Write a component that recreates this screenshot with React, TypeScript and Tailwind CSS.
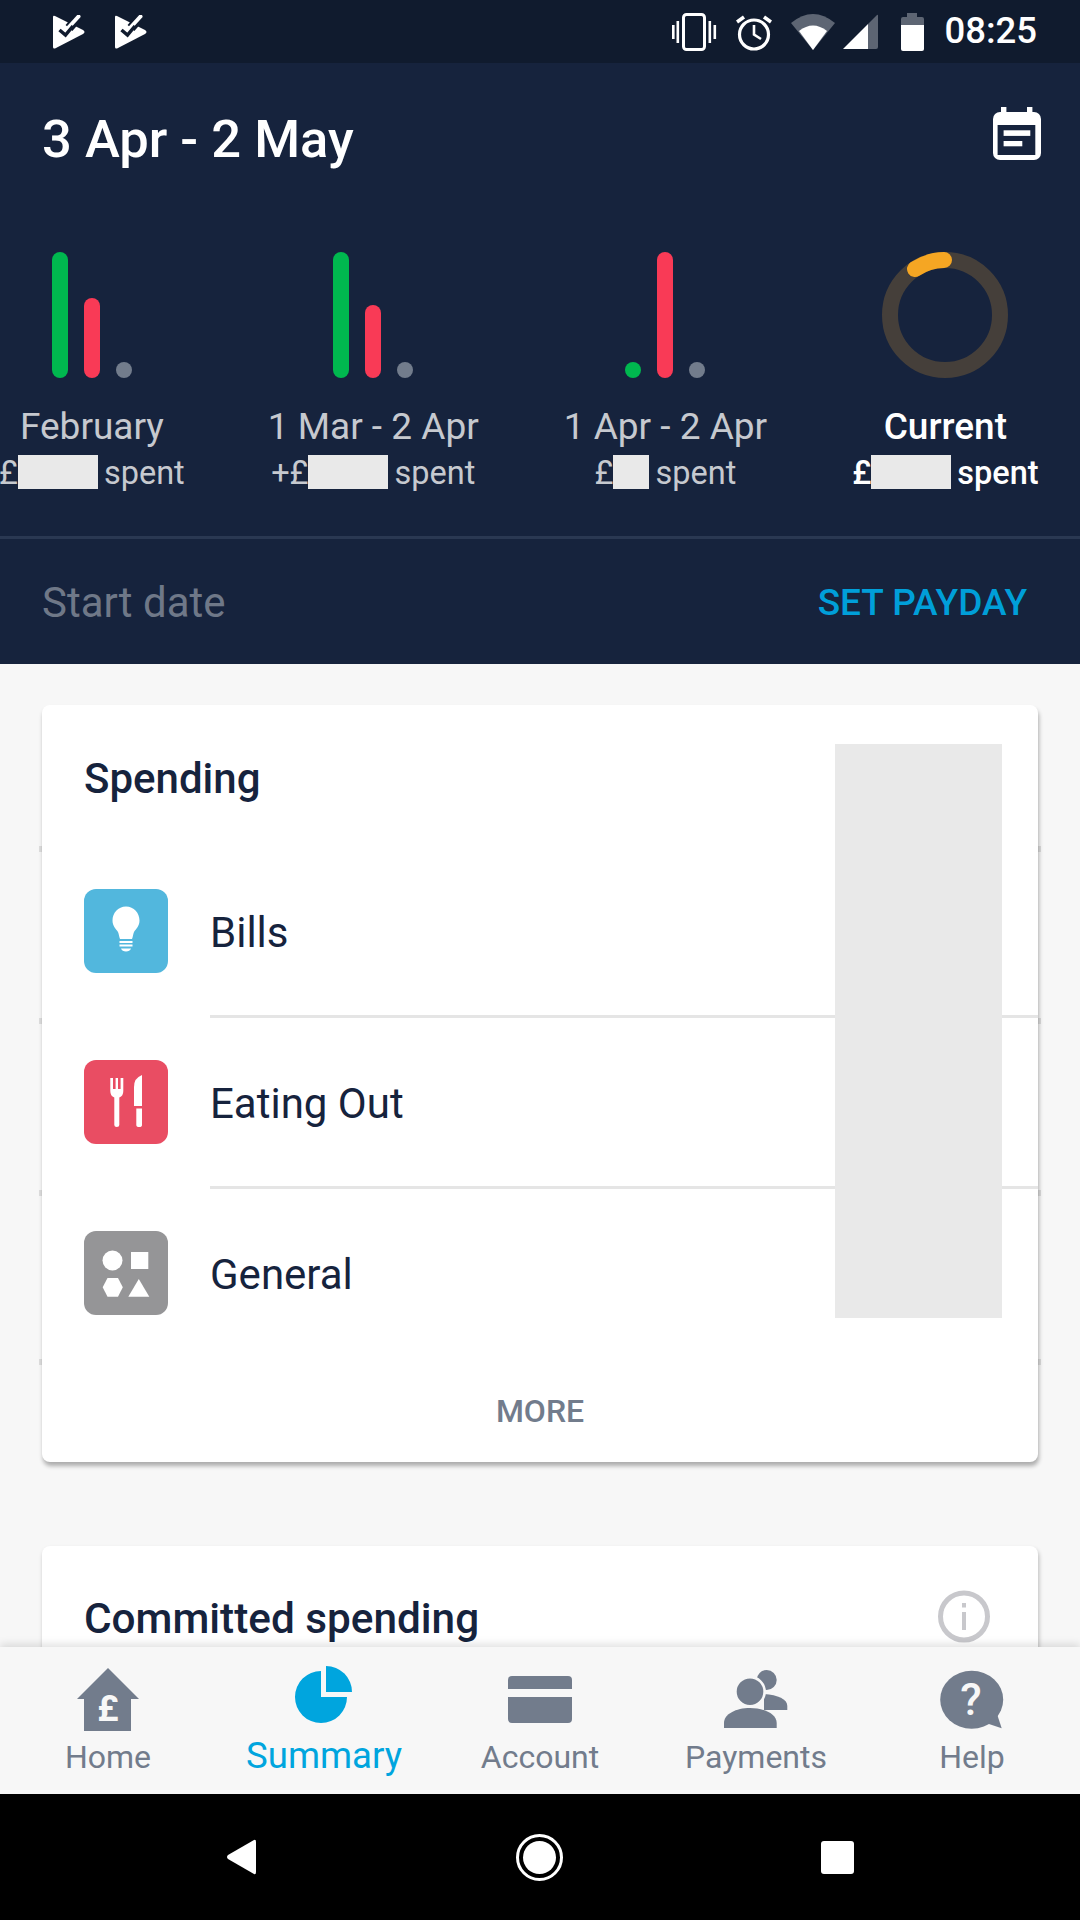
const GREY = "#727c8c";
const PAGE = "#f7f7f7";

function AppIcon() {
  return (
    <svg width="32" height="34" viewBox="0 0 32 34">
      <path d="M2 1 L30 15 Q33 17 30 19 L2 33.5 Q0 34 0 32 V2 Q0 0 2 1 Z" fill="#fff" />
      <path d="M27 0 L16 13" stroke="#101b2e" strokeWidth="9" fill="none" />
      <path d="M25.5 1.5 L15 13" stroke="#fff" strokeWidth="4" strokeLinecap="round" fill="none" />
      <path d="M6.5 15 L12.5 20 L20 11" stroke="#101b2e" strokeWidth="3.5" fill="none" />
    </svg>
  );
}

function StatusIcons() {
  return (
    <div className="ml-auto flex items-center">
      <svg width="46" height="38" viewBox="0 0 46 38" fill="#fff">
        <rect x="12.5" y="1.5" width="21" height="35" rx="3" fill="none" stroke="#fff" strokeWidth="3" />
        <rect x="1" y="12" width="2.6" height="14" />
        <rect x="5.5" y="8" width="2.6" height="22" />
        <rect x="37.5" y="8" width="2.6" height="22" />
        <rect x="42.5" y="12" width="2.6" height="14" />
      </svg>
      <svg className="ml-[19px]" width="36" height="38" viewBox="0 0 36 38" fill="none" stroke="#fff">
        <circle cx="18" cy="21.5" r="14.5" strokeWidth="3.2" />
        <path d="M18 12 V21.5 L25 26" strokeWidth="2.6" />
        <path d="M1 9 L8 4 M28 4 L35 9" strokeWidth="3.6" />
      </svg>
      <svg className="ml-[19px]" width="45" height="38" viewBox="0 0 45 38">
        <path d="M0 10 Q22 -8 44 10 L22 37 Z" fill="#5d6573" strokeLinejoin="round" />
        <path d="M8 18 Q22 7 36 18 L22 37 Z" fill="#fff" />
      </svg>
      <svg className="ml-[7px]" width="35" height="36" viewBox="0 0 35 36">
        <path d="M0 35 L25 10 V35 Z" fill="#fff" />
        <path d="M25 10 L34 1 Q35 0 35 2 V33 Q35 35 33 35 H25 Z" fill="#5d6573" />
      </svg>
      <svg className="ml-[23px]" width="23" height="38" viewBox="0 0 23 38">
        <path d="M6 0 H16 V4 H21 Q23 4 23 6 V12 H0 V6 Q0 4 2 4 H6 Z" fill="#5d6573" />
        <path d="M0 12 H23 V36 Q23 38 21 38 H2 Q0 38 0 36 Z" fill="#fff" />
      </svg>
      <span className="ml-[20px] text-[36.5px] font-medium leading-none text-white">08:25</span>
    </div>
  );
}

function CalendarIcon() {
  return (
    <svg className="-mt-[11px]" width="48" height="54" viewBox="0 0 48 54">
      <rect x="8" y="0" width="5.4" height="8" fill="#fff" />
      <rect x="34" y="0" width="5.4" height="8" fill="#fff" />
      <rect x="0" y="5" width="48" height="48" rx="7" fill="#fff" />
      <rect x="4.6" y="18" width="37.7" height="30" fill="#16233d" />
      <rect x="10.6" y="23.3" width="26.7" height="5.6" fill="#fff" />
      <rect x="10.6" y="34" width="18.7" height="5.3" fill="#fff" />
    </svg>
  );
}

function Bars({ green, red, grey }: { green: string; red: string; grey: string }) {
  return (
    <div className="flex h-[126px] items-end gap-4">
      <div className={`w-4 rounded-full bg-[#00b84f] ${green}`} />
      <div className={`w-4 rounded-full bg-[#f93a56] ${red}`} />
      <div className={`w-4 rounded-full bg-[#727c8c] ${grey}`} />
    </div>
  );
}

function Ring() {
  return (
    <svg width="126" height="126" viewBox="0 0 126 126" fill="none" strokeWidth="16">
      <circle cx="63" cy="63" r="55" stroke="#453f3a" />
      <path d="M33 17 A55 55 0 0 1 62 8" stroke="#f5a623" strokeLinecap="round" />
    </svg>
  );
}

function Period({
  chart,
  label,
  prefix,
  hidden,
  current,
  className = "",
}: {
  chart: React.ReactNode;
  label: string;
  prefix: string;
  hidden: string;
  current?: boolean;
  className?: string;
}) {
  const tone = current ? "font-medium text-white" : "text-[#c6c9cf]";
  return (
    <div className={`flex shrink-0 flex-col items-center ${tone} ${className}`}>
      {chart}
      <div className="mt-[28px] text-[37px] leading-[42px]">{label}</div>
      <div className="mt-[7px] flex h-[34px] items-center text-[32.5px] leading-[34px]">
        <span className="translate-y-[1px]">{prefix}</span>
        <div className={`h-[34px] bg-[#e9e9e9] ${hidden}`} />
        <span className="ml-[6px] translate-y-[1px]">spent</span>
      </div>
    </div>
  );
}

function BulbIcon() {
  return (
    <svg width="84" height="84" viewBox="0 0 84 84" fill="#fff">
      <path d="M42 17.5 C34 17.5 28.5 24 28.5 31.5 C28.5 37 32 40 34 43 C35 45 35 48 36 50 H48 C49 48 49 45 50 43 C52 40 55.5 37 55.5 31.5 C55.5 24 50 17.5 42 17.5 Z" />
      <rect x="35.5" y="52" width="13" height="2" />
      <rect x="35.5" y="55.5" width="13" height="2" />
      <path d="M37 59.5 H47 C46 63.5 38 63.5 37 59.5 Z" />
    </svg>
  );
}

function CutleryIcon() {
  return (
    <svg width="84" height="84" viewBox="0 0 84 84" fill="#fff">
      <path d="M26.3 18 H29 V29 H31.6 V18 H34 V29 H36.6 V18 H39.3 V31 Q39.3 36 35.3 37.5 V65 Q35.3 67 32.8 67 Q30.3 67 30.3 65 V37.5 Q26.3 36 26.3 31 Z" />
      <path d="M58 15 V46 H50 V27 Q50 18 58 15 Z" />
      <path d="M52.3 48.5 H58 V65 Q58 67 55.2 67 Q52.3 67 52.3 65 Z" />
    </svg>
  );
}

function ShapesIcon() {
  return (
    <svg width="84" height="84" viewBox="0 0 84 84" fill="#fff">
      <circle cx="28.5" cy="29.5" r="10" />
      <rect x="47" y="21" width="17.3" height="17" />
      <path d="M23.5 47 H34 L38.8 56.3 L34 65.7 H23.5 L18.7 56.3 Z" />
      <path d="M54.8 48 L65.3 65.7 H44.3 Z" />
    </svg>
  );
}

function Category({
  icon,
  color,
  label,
  divider,
}: {
  icon: React.ReactNode;
  color: string;
  label: string;
  divider?: boolean;
}) {
  return (
    <div className="flex h-[171px] pl-[42px]">
      <div className="flex items-center pb-[3px]">
        <div className={`h-[84px] w-[84px] rounded-[12px] ${color}`}>{icon}</div>
      </div>
      <div
        className={`ml-[42px] flex flex-1 items-center pt-[2px] text-[42px] text-[#16233d] ${
          divider ? "border-b-[3px] border-[#e5e5e5]" : "pb-[3px]"
        }`}
      >
        {label}
      </div>
    </div>
  );
}

function SpendingCard() {
  return (
    <section className="relative mx-[42px] mt-[41px] rounded-lg bg-white shadow-[1px_4px_4px_rgba(0,0,0,0.3)]">
      <h2 className="h-[142px] pl-[42px] pt-[49px] text-[42px] font-medium leading-[50px] text-[#16233d]">
        Spending
      </h2>
      <Category icon={<BulbIcon />} color="bg-[#52b7dd]" label="Bills" divider />
      <Category icon={<CutleryIcon />} color="bg-[#e94d63]" label="Eating Out" divider />
      <Category icon={<ShapesIcon />} color="bg-[#959597]" label="General" />
      <div className="flex h-[102px] items-center justify-center text-[32px] font-medium text-[#727c8c]">
        MORE
      </div>

      <div className="absolute left-[793px] top-[39px] h-[574px] w-[167px] bg-[#e9e9e9]" />

      <div className="absolute -left-[3px] top-[141px] h-[6px] w-[3px] bg-black/10" />
      <div className="absolute -left-[3px] top-[313px] h-[6px] w-[3px] bg-black/10" />
      <div className="absolute -left-[3px] top-[485px] h-[6px] w-[3px] bg-black/10" />
      <div className="absolute -left-[3px] top-[654px] h-[6px] w-[3px] bg-black/10" />
      <div className="absolute -right-[3px] top-[141px] h-[6px] w-[3px] bg-black/10" />
      <div className="absolute -right-[3px] top-[313px] h-[6px] w-[3px] bg-black/10" />
      <div className="absolute -right-[3px] top-[485px] h-[6px] w-[3px] bg-black/10" />
      <div className="absolute -right-[3px] top-[654px] h-[6px] w-[3px] bg-black/10" />
    </section>
  );
}

function CommittedCard() {
  return (
    <section className="mx-[42px] mt-[84px] flex h-[300px] items-start justify-between rounded-lg bg-white pl-[42px] pr-[48px] shadow-[1px_3px_4px_rgba(0,0,0,0.25)]">
      <h2 className="pt-[48px] text-[42.3px] font-medium leading-[50px] text-[#16233d]">Committed spending</h2>
      <svg className="mt-[44px]" width="52" height="53" viewBox="0 0 52 53" fill="none">
        <circle cx="26" cy="26.5" r="23.5" stroke="#c8c8cc" strokeWidth="5" />
        <rect x="24" y="13" width="4" height="4.5" fill="#c8c8cc" />
        <rect x="24" y="22" width="4" height="18" fill="#c8c8cc" />
      </svg>
    </section>
  );
}

function HomeIcon() {
  return (
    <svg width="80" height="70" viewBox="0 0 80 70">
      <path d="M40 4 L71 35 H63 V67 H16 V35 H9 Z" fill={GREY} />
      <text x="40" y="57" textAnchor="middle" fontSize="36" fontWeight="700" fill={PAGE}>
        £
      </text>
    </svg>
  );
}

function SummaryIcon() {
  return (
    <svg width="80" height="70" viewBox="0 0 80 70" fill="#00a5de">
      <path d="M37 7 A26 26 0 1 0 63 33 H37 Z" />
      <path d="M42 2 A26 26 0 0 1 68 28 H42 Z" />
    </svg>
  );
}

function AccountIcon() {
  return (
    <svg width="80" height="70" viewBox="0 0 80 70">
      <rect x="8" y="12" width="64" height="47" rx="4" fill={GREY} />
      <rect x="8" y="25" width="64" height="8" fill={PAGE} />
    </svg>
  );
}

function PaymentsIcon() {
  return (
    <svg width="80" height="70" viewBox="0 0 80 70" fill={GREY}>
      <circle cx="50.7" cy="16" r="10" />
      <path d="M48 30 C62 31 71.3 35 71.3 42 V46 H48 Z" />
      <circle cx="34" cy="27.7" r="14.6" stroke={PAGE} strokeWidth="2.6" />
      <path d="M8 64 V59 C8 50 20 44 34 44 C48 44 60.7 50 60.7 59 V64 Z" />
    </svg>
  );
}

function HelpIcon() {
  return (
    <svg width="80" height="70" viewBox="0 0 80 70" fill={GREY}>
      <ellipse cx="39.7" cy="35.7" rx="31.5" ry="29" />
      <path d="M65 50 L69.7 64.3 L54.7 59.3 Z" />
      <text x="39" y="51" textAnchor="middle" fontSize="44" fontWeight="500" fill={PAGE}>
        ?
      </text>
    </svg>
  );
}

function NavItem({ icon, label, active }: { icon: React.ReactNode; label: string; active?: boolean }) {
  return (
    <div className="flex w-[216px] flex-col items-center">
      {icon}
      <span
        className={`leading-[40px] ${
          active ? "mt-[2px] text-[36.6px] text-[#00a5de]" : "mt-[3px] text-[32px] text-[#727c8c]"
        }`}
      >
        {label}
      </span>
    </div>
  );
}

export default function App() {
  return (
    <div className="flex h-[1920px] w-[1080px] flex-col overflow-hidden bg-[#f7f7f7] font-[Roboto,sans-serif]">
      <div className="flex h-[63px] shrink-0 items-center bg-[#101b2e] pl-[53px] pr-[43px]">
        <AppIcon />
        <div className="ml-[30px]">
          <AppIcon />
        </div>
        <StatusIcons />
      </div>

      <header className="shrink-0 bg-[#16233d]">
        <div className="flex items-center justify-between pl-[42px] pr-[39px] pt-[48px]">
          <h1 className="text-[52.5px] font-medium leading-[56px] text-white">3 Apr - 2 May</h1>
          <CalendarIcon />
        </div>

        <div className="-ml-[1px] mt-[85px] flex gap-[83px]">
          <Period
            chart={<Bars green="h-[126px]" red="h-[80px]" grey="h-4" />}
            label="February"
            prefix="£"
            hidden="w-[80px]"
          />
          <Period
            chart={<Bars green="h-[126px]" red="h-[73px]" grey="h-4" />}
            label="1 Mar - 2 Apr"
            prefix="+£"
            hidden="w-[80px]"
          />
          <Period
            chart={<Bars green="h-4" red="h-[126px]" grey="h-4" />}
            label="1 Apr - 2 Apr"
            prefix="£"
            hidden="w-[36px]"
            className="ml-[2px]"
          />
          <Period chart={<Ring />} label="Current" prefix="£" hidden="w-[80px]" current className="ml-[2px]" />
        </div>

        <div className="mt-[47px] flex h-[128px] items-center justify-between border-t-[3px] border-[#2a3852] pl-[42px] pr-[53px]">
          <span className="translate-y-[1px] text-[42px] text-[#6f7888]">Start date</span>
          <span className="translate-y-[1px] text-[37px] font-medium text-[#009fd9]">SET PAYDAY</span>
        </div>
      </header>

      <main className="min-h-0 flex-1 overflow-hidden">
        <SpendingCard />
        <CommittedCard />
      </main>

      <nav className="relative z-10 flex h-[147px] shrink-0 bg-[#f7f7f7] pt-[17px] shadow-[0_-3px_8px_rgba(0,0,0,0.12)]">
        <NavItem icon={<HomeIcon />} label="Home" />
        <NavItem icon={<SummaryIcon />} label="Summary" active />
        <NavItem icon={<AccountIcon />} label="Account" />
        <NavItem icon={<PaymentsIcon />} label="Payments" />
        <NavItem icon={<HelpIcon />} label="Help" />
      </nav>

      <div className="flex h-[126px] shrink-0 items-center bg-black">
        <svg className="ml-[226px]" width="30" height="36" viewBox="0 0 30 36">
          <path d="M28 1 Q30 0 30 3 V33 Q30 36 28 35 L2 20 Q0 18 2 16 Z" fill="#fff" />
        </svg>
        <svg className="ml-[260px]" width="47" height="47" viewBox="0 0 47 47">
          <circle cx="23.5" cy="23.5" r="22" fill="none" stroke="#fff" strokeWidth="3" />
          <circle cx="23.5" cy="23.5" r="16.5" fill="#fff" />
        </svg>
        <div className="ml-[258px] h-[33px] w-[33px] rounded-[3px] bg-white" />
      </div>
    </div>
  );
}
